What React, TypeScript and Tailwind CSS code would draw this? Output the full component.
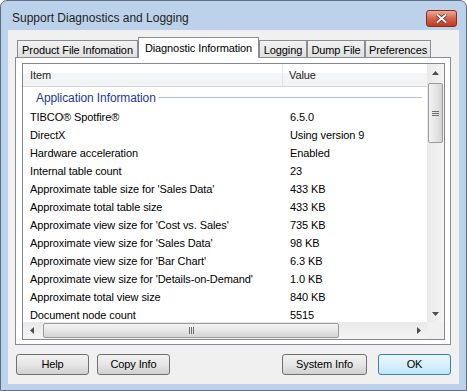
import React from "react";

type Row = [string, string];

const rows: Row[] = [
  ["TIBCO® Spotfire®", "6.5.0"],
  ["DirectX", "Using version 9"],
  ["Hardware acceleration", "Enabled"],
  ["Internal table count", "23"],
  ["Approximate table size for 'Sales Data'", "433 KB"],
  ["Approximate total table size", "433 KB"],
  ["Approximate view size for 'Cost vs. Sales'", "735 KB"],
  ["Approximate view size for 'Sales Data'", "98 KB"],
  ["Approximate view size for 'Bar Chart'", "6.3 KB"],
  ["Approximate view size for 'Details-on-Demand'", "1.0 KB"],
  ["Approximate total view size", "840 KB"],
  ["Document node count", "5515"],
];

function Arrow({ dir }: { dir: "up" | "down" | "left" | "right" }) {
  const points = {
    up: "0,4 7,4 3.5,0",
    down: "0,0 7,0 3.5,4",
    left: "4,0 4,7 0,3.5",
    right: "0,0 0,7 4,3.5",
  }[dir];
  const vertical = dir === "up" || dir === "down";
  return (
    <svg width={vertical ? 7 : 4} height={vertical ? 4 : 7} className="block">
      <polygon points={points} fill="#4d4d4d" />
    </svg>
  );
}

function Grip({ vertical }: { vertical: boolean }) {
  return (
    <div className={vertical ? "flex flex-col gap-[1px]" : "flex gap-[1px]"}>
      {[0, 1, 2].map((i) => (
        <div
          key={i}
          className={
            vertical
              ? "h-[1px] w-[7px] bg-[#6e6e6e]"
              : "h-[7px] w-[1px] bg-[#6e6e6e]"
          }
        />
      ))}
    </div>
  );
}

function VScrollbar() {
  return (
    <div className="flex w-[17px] flex-col bg-gradient-to-r from-[#e9e9e9] to-[#f4f4f4]">
      <div className="flex h-[17px] items-center justify-center">
        <Arrow dir="up" />
      </div>
      <div className="mx-[1px] mt-[2px] flex h-[60px] items-center justify-center rounded-[2px] border border-[#9b9b9b] bg-gradient-to-r from-[#f4f4f4] via-[#e6e6e6] to-[#d4d4d4]">
        <Grip vertical />
      </div>
      <div className="flex-1" />
      <div className="flex h-[17px] items-center justify-center">
        <Arrow dir="down" />
      </div>
    </div>
  );
}

function HScrollbar() {
  return (
    <div className="flex h-[17px] flex-1 bg-gradient-to-b from-[#e9e9e9] to-[#f4f4f4]">
      <div className="flex w-[17px] items-center justify-center">
        <Arrow dir="left" />
      </div>
      <div className="my-[1px] ml-[3px] flex w-[296px] items-center justify-center rounded-[2px] border border-[#9b9b9b] bg-gradient-to-b from-[#f4f4f4] via-[#e6e6e6] to-[#d4d4d4]">
        <Grip vertical={false} />
      </div>
      <div className="flex-1" />
      <div className="flex w-[17px] items-center justify-center">
        <Arrow dir="right" />
      </div>
    </div>
  );
}

function Tab({ label, width }: { label: string; width: string }) {
  return (
    <div
      className={`flex h-[17px] ${width} items-center justify-center border border-b-0 border-[#898c95] bg-gradient-to-b from-[#f2f2f2] to-[#e0e0e0] pt-[2px]`}
    >
      {label}
    </div>
  );
}

function Button({
  label,
  width,
  primary,
}: {
  label: string;
  width: string;
  primary?: boolean;
}) {
  return (
    <div
      className={`flex h-[21px] ${width} items-center justify-center rounded-[3px] border ${
        primary
          ? "border-[#3c7fb1] bg-gradient-to-b from-[#eaf6fd] via-[#d9f0fc] to-[#bee6fd]"
          : "border-[#707070] bg-gradient-to-b from-[#f2f2f2] via-[#e6e6e6] to-[#d0d0d0]"
      }`}
    >
      {label}
    </div>
  );
}

export default function App() {
  return (
    <div className="h-[391px] w-[467px] bg-white font-['Liberation_Sans',Arial,sans-serif] text-[11px] tracking-[-0.1px] text-black">
      <div className="flex h-full flex-col rounded-t-[7px] border border-[#5e6f86] bg-[#bcd2eb]">
        {/* title bar */}
        <div className="flex h-[29px] items-start justify-between pl-[11px] pr-[9px]">
          <span className="mt-[10px] text-[12px] leading-[14px] tracking-normal text-[#1e1e1e]">
            Support Diagnostics and Logging
          </span>
          <div className="mt-[9px] flex h-[17px] w-[31px] items-center justify-center rounded-[3px] border border-[#8a2b1e] bg-gradient-to-b from-[#eaa99b] via-[#d4634c] to-[#c0391f]">
            <svg width="11" height="9" viewBox="0 0 11 9">
              <path
                d="M1.5 1 L9.5 8 M9.5 1 L1.5 8"
                stroke="#5a2418"
                strokeWidth="3.4"
                strokeLinecap="square"
              />
              <path
                d="M1.5 1 L9.5 8 M9.5 1 L1.5 8"
                stroke="#ffffff"
                strokeWidth="2"
                strokeLinecap="square"
              />
            </svg>
          </div>
        </div>

        {/* client area */}
        <div className="mx-[7px] mb-[6px] flex flex-1 flex-col bg-[#f0f0f0]">
          <div className="relative z-10 flex h-[27px] items-end pl-[9px]">
            <Tab label="Product File Infomation" width="w-[121px]" />
            <div className="-mb-px flex h-[21px] w-[121px] items-start justify-center border border-b-0 border-[#898c95] bg-white pt-[2px]">
              Diagnostic Information
            </div>
            <Tab label="Logging" width="w-[48px]" />
            <Tab label="Dump File" width="w-[58px]" />
            <Tab label="Preferences" width="w-[66px]" />
          </div>

          <div className="ml-[7px] h-[288px] w-[436px] border border-[#898c95] bg-white pb-[4px] pl-[6px] pr-[5px] pt-[5px]">
            <div className="flex h-full flex-col border border-[#828790]">
              <div className="flex min-h-0 flex-1">
                <div className="flex-1 overflow-hidden">
                  <div className="flex h-[23px] border-b border-[#d5d5d5] bg-[linear-gradient(#ffffff_0%,#ffffff_40%,#f3f4f6_40%,#f3f4f6_100%)] leading-[22px] text-[#1e1e1e]">
                    <div className="w-[260px] border-r border-[#e3e4e6] pl-[7px]">
                      Item
                    </div>
                    <div className="flex-1 pl-[6px]">Value</div>
                  </div>
                  <div className="flex h-[21px] items-center pl-[13px] pr-[5px]">
                    <span className="text-[12px] tracking-[-0.1px] text-[#1f3a93]">
                      Application Information
                    </span>
                    <div className="ml-[3px] h-px flex-1 bg-[#b4c3dc]" />
                  </div>
                  {rows.map(([item, value]) => (
                    <div key={item} className="flex h-[18px] leading-[18px]">
                      <div className="w-[260px] whitespace-nowrap pl-[7px]">
                        {item}
                      </div>
                      <div className="flex-1 whitespace-nowrap pl-[7px]">
                        {value}
                      </div>
                    </div>
                  ))}
                </div>
                <VScrollbar />
              </div>
              <div className="flex">
                <HScrollbar />
                <div className="h-[17px] w-[17px] bg-[#f0f0f0]" />
              </div>
            </div>
          </div>

          <div className="mt-[9px] flex px-[8px]">
            <Button label="Help" width="w-[73px]" />
            <div className="ml-[8px]">
              <Button label="Copy Info" width="w-[73px]" />
            </div>
            <div className="flex-1" />
            <Button label="System Info" width="w-[85px]" />
            <div className="ml-[11px]">
              <Button label="OK" width="w-[73px]" primary />
            </div>
          </div>
        </div>
      </div>
    </div>
  );
}
